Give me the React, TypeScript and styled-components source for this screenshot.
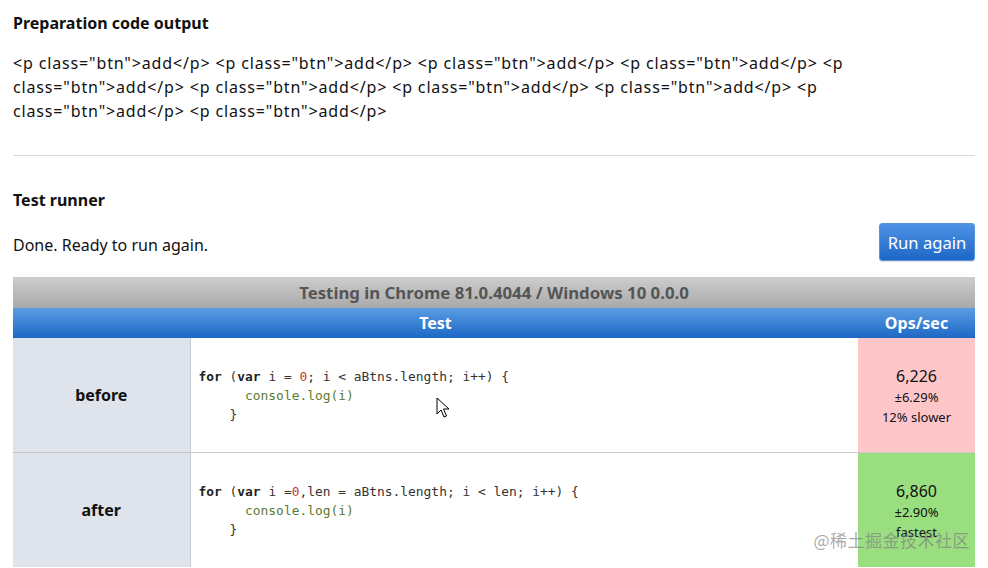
import React from "react";
import styled, { createGlobalStyle } from "styled-components";

const Global = createGlobalStyle`
  html, body { margin: 0; padding: 0; background: #fff; }
  body { font-family: "Noto Sans", "Open Sans", sans-serif; color: #111; }
`;

const Page = styled.div`
  position: relative;
  width: 962px;
  padding: 0 13px;
  height: 568px;
  overflow: hidden;
`;

const Heading = styled.h2<{ $top: number }>`
  margin: 0;
  font-size: 16px;
  line-height: 24px;
  font-weight: 700;
  padding-top: ${(p) => p.$top}px;
`;

const Output = styled.p`
  margin: 16px 0 0;
  font-size: 16px;
  line-height: 24px;
  letter-spacing: 0.85px;
  color: #111;
`;

const Rule = styled.hr`
  margin: 32px 0 0;
  border: 0;
  border-top: 1px solid #dcdcdc;
  height: 0;
`;

const StatusRow = styled.div`
  display: flex;
  align-items: center;
  justify-content: space-between;
  margin-top: 11px;
  height: 38px;
`;

const Status = styled.span`
  font-size: 16px;
  line-height: 24px;
  padding-top: 5px;
`;

const RunButton = styled.button`
  height: 38px;
  width: 96px;
  padding: 0;
  border: 1px solid #5a93dc;
  border-radius: 3px;
  background: linear-gradient(#4e92e4, #1c67c6);
  color: #fff;
  font-family: inherit;
  font-size: 16.6px;
  box-shadow: 0 1px 1px rgba(0, 0, 0, 0.12);
`;

const Table = styled.table`
  margin-top: 16px;
  width: 962px;
  border-collapse: collapse;
  table-layout: fixed;
`;

const Caption = styled.th`
  height: 31px;
  padding: 0;
  background: linear-gradient(#cdcdcd, #a9a9a9);
  color: #555;
  font-size: 16.8px;
  font-weight: 700;
  text-align: center;
`;

const HeadCell = styled.th`
  height: 30px;
  padding: 0;
  background: linear-gradient(#5b9de2, #1c68c6);
  color: #fff;
  font-size: 16px;
  font-weight: 700;
  text-align: center;
`;

const Row = styled.tr<{ $first?: boolean }>`
  border-top: ${(p) => (p.$first ? "0" : "1px solid #c9c9c9")};
`;

const NameCell = styled.td`
  height: 114px;
  padding: 0;
  background: #dee3ec;
  border-right: 1px solid #c4cad4;
  text-align: center;
  font-size: 16px;
  font-weight: 700;
`;

const CodeCell = styled.td`
  padding: 0 8px;
  background: #fff;
  vertical-align: middle;
`;

const Code = styled.pre`
  margin: 0;
  font-family: "DejaVu Sans Mono", "Liberation Mono", monospace;
  font-size: 12.9px;
  line-height: 19px;
  color: #333;
`;

const Kw = styled.b`
  color: #222;
`;

const Num = styled.span`
  color: #c0392b;
`;

const Fn = styled.span`
  color: #5b7a30;
`;

const OpsCell = styled.td<{ $bg: string }>`
  padding: 0;
  background: ${(p) => p.$bg};
  text-align: center;
  vertical-align: middle;
`;

const OpsMain = styled.div`
  font-size: 16px;
  line-height: 22px;
  padding-top: 2px;
`;

const OpsSub = styled.div`
  font-size: 13px;
  line-height: 20px;
`;

const Watermark = styled.div`
  position: absolute;
  right: 18px;
  bottom: 16px;
  font-family: "Noto Sans CJK SC", sans-serif;
  font-size: 17px;
  color: rgba(130, 130, 130, 0.7);
  letter-spacing: 0.5px;
`;

const Cursor = styled.svg`
  position: absolute;
  left: 436px;
  top: 397px;
`;

const COLS = [177, 668, 117];

const tags = Array.from({ length: 10 }, () => '<p class="btn">add</p>').join(" ");

export default function App() {
  return (
    <>
      <Global />
      <Page>
        <Heading $top={11}>Preparation code output</Heading>
        <Output>{tags}</Output>
        <Rule />
        <Heading $top={32}>Test runner</Heading>
        <StatusRow>
          <Status>Done. Ready to run again.</Status>
          <RunButton>Run again</RunButton>
        </StatusRow>
        <Table>
          <colgroup>
            {COLS.map((w, i) => (
              <col key={i} style={{ width: w }} />
            ))}
          </colgroup>
          <thead>
            <tr>
              <Caption colSpan={3}>Testing in Chrome 81.0.4044 / Windows 10 0.0.0</Caption>
            </tr>
            <tr>
              <HeadCell colSpan={2}>Test</HeadCell>
              <HeadCell>Ops/sec</HeadCell>
            </tr>
          </thead>
          <tbody>
            <Row $first>
              <NameCell>before</NameCell>
              <CodeCell>
                <Code>
                  <Kw>for</Kw> (<Kw>var</Kw> i = <Num>0</Num>; i &lt; aBtns.length; i++) {"{"}
                  {"\n      "}
                  <Fn>console.log(i)</Fn>
                  {"\n    }"}
                </Code>
              </CodeCell>
              <OpsCell $bg="#ffc6c9">
                <OpsMain>6,226</OpsMain>
                <OpsSub>±6.29%</OpsSub>
                <OpsSub>12% slower</OpsSub>
              </OpsCell>
            </Row>
            <Row>
              <NameCell>after</NameCell>
              <CodeCell>
                <Code>
                  <Kw>for</Kw> (<Kw>var</Kw> i =<Num>0</Num>,len = aBtns.length; i &lt; len; i++) {"{"}
                  {"\n      "}
                  <Fn>console.log(i)</Fn>
                  {"\n    }"}
                </Code>
              </CodeCell>
              <OpsCell $bg="#99de7f">
                <OpsMain>6,860</OpsMain>
                <OpsSub>±2.90%</OpsSub>
                <OpsSub>fastest</OpsSub>
              </OpsCell>
            </Row>
          </tbody>
        </Table>
        <Cursor width="14" height="22" viewBox="0 0 14 22">
          <path d="M1 1 L1 17 L5 13 L8 20 L10.5 19 L7.5 12 L13 12 Z" fill="#fff" stroke="#000" strokeWidth="1" strokeLinejoin="round" />
        </Cursor>
        <Watermark>@稀土掘金技术社区</Watermark>
      </Page>
    </>
  );
}
